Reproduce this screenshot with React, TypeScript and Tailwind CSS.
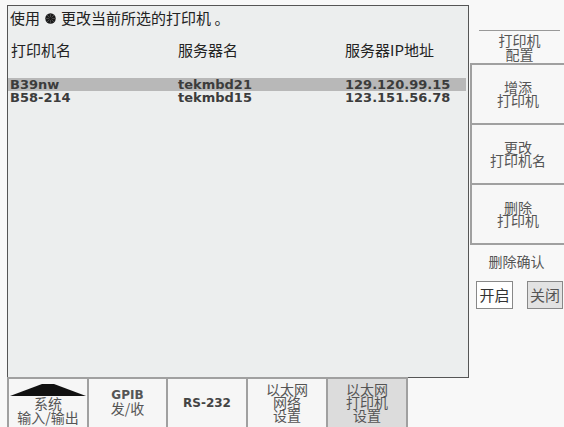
import React from "react";

const cjk = { fontFamily: '"Noto Sans CJK SC", "DejaVu Sans", sans-serif' };
const latin = { fontFamily: '"DejaVu Sans", "Noto Sans CJK SC", sans-serif' };

function Knob() {
  const spokes = [0, 45, 90, 135];
  return (
    <svg width="11" height="11" viewBox="0 0 22 22" className="mx-[5px]">
      <circle cx="11" cy="11" r="10.5" fill="#1a1a1a" />
      {spokes.map((a) => (
        <line
          key={a}
          x1="11"
          y1="1"
          x2="11"
          y2="21"
          stroke="#666"
          strokeWidth="1.2"
          transform={`rotate(${a} 11 11)`}
        />
      ))}
      <circle cx="11" cy="11" r="3" fill="#1a1a1a" />
    </svg>
  );
}

function SideButton({ text }: { text: string }) {
  return (
    <div
      className="h-[62px] border-2 border-r-0 border-[#a0a0a0] -mt-[2px] first:mt-0 flex items-center justify-center text-center whitespace-pre-line text-[14px] leading-[13px] text-[#555] bg-[#f7f7f7]"
      style={cjk}
    >
      {text}
    </div>
  );
}

function BottomButton({ children, w, active }: { children: React.ReactNode; w: string; active?: boolean }) {
  return (
    <div
      className={`${w} h-[52px] border-2 border-b-0 border-[#a0a0a0] -ml-[2px] first:ml-0 flex flex-col items-center justify-center text-[#444] ${active ? "bg-[#dcdcdc]" : "bg-[#f6f6f6]"}`}
    >
      {children}
    </div>
  );
}

export default function App() {
  return (
    <div className="w-[564px] h-[427px] overflow-hidden bg-[#f8f8f8] flex flex-col">
      <div className="flex h-[378px]">
        <div className="ml-[7px] mt-[5px] w-[462px] h-[373px] border border-[#555] bg-[#eceeee] text-[#222]">
          <div className="pl-[2px] pt-[3px] text-[15px] leading-[18px] flex items-center" style={cjk}>
            使用
            <Knob />
            更改当前所选的打印机 。
          </div>
          <div className="flex text-[15px] leading-[18px] mt-[14px]" style={cjk}>
            <div className="w-[170px] pl-[3px]">打印机名</div>
            <div className="w-[167px]">服务器名</div>
            <div>服务器IP地址</div>
          </div>
          <div
            className="mt-[19px] mr-[2px] flex text-[13px] leading-[13px] font-bold text-[#3c3c3c] whitespace-pre-line bg-[linear-gradient(to_bottom,#b8b8b8_13px,transparent_13px)]"
            style={latin}
          >
            <div className="w-[170px] pl-[2px]">{"B39nw\nB58-214"}</div>
            <div className="w-[167px]">{"tekmbd21\ntekmbd15"}</div>
            <div>{"129.120.99.15\n123.151.56.78"}</div>
          </div>
        </div>
        <div className="flex-1 flex flex-col">
          <div
            className="mt-[30px] ml-[10px] mr-[4px] border-t border-[#999] h-[33px] flex items-center justify-center text-center whitespace-pre-line text-[14px] leading-[14px] text-[#555]"
            style={cjk}
          >
            {"打印机\n配置"}
          </div>
          <div className="ml-[1px] flex flex-col">
            <SideButton text={"增添\n打印机"} />
            <SideButton text={"更改\n打印机名"} />
            <SideButton text={"删除\n打印机"} />
          </div>
          <div className="text-center text-[14px] leading-[14px] text-[#555] mt-[9px]" style={cjk}>
            删除确认
          </div>
          <div className="flex justify-between mt-[13px] ml-[7px] mr-[1px]">
            <div className="w-[37px] h-[28px] border border-[#888] bg-white flex items-center justify-center text-[15px] text-[#333]" style={cjk}>
              开启
            </div>
            <div className="w-[36px] h-[28px] border border-[#888] bg-[#e2e2e2] flex items-center justify-center text-[15px] text-[#555]" style={cjk}>
              关闭
            </div>
          </div>
        </div>
      </div>
      <div className="flex ml-[7px] -mt-[1px]">
        <BottomButton w="w-[82px]">
          <svg width="76" height="14" viewBox="0 0 76 14" className="-mt-[1px] shrink-0">
            <polygon points="0,13 32,1 44,1 76,13" fill="#111" />
          </svg>
          <div className="text-[14px] leading-[14px] text-[#555] text-center whitespace-pre-line -mt-[1px]" style={cjk}>
            {"系统\n输入/输出"}
          </div>
        </BottomButton>
        <BottomButton w="w-[81px]">
          <div className="text-center text-[14px] leading-[13px] text-[#555] -mt-[6px]" style={cjk}>
            <span className="text-[12px] font-bold" style={latin}>GPIB</span>
            <br />
            发/收
          </div>
        </BottomButton>
        <BottomButton w="w-[82px]">
          <div className="text-[12px] leading-[12px] font-bold text-[#444] -mt-[3px]" style={latin}>
            RS-232
          </div>
        </BottomButton>
        <BottomButton w="w-[82px]">
          <div className="text-[14px] leading-[13px] text-[#555] text-center whitespace-pre-line -mt-[4px]" style={cjk}>
            {"以太网\n网络\n设置"}
          </div>
        </BottomButton>
        <BottomButton w="w-[82px]" active>
          <div className="text-[14px] leading-[13px] text-[#555] text-center whitespace-pre-line -mt-[4px]" style={cjk}>
            {"以太网\n打印机\n设置"}
          </div>
        </BottomButton>
      </div>
    </div>
  );
}
